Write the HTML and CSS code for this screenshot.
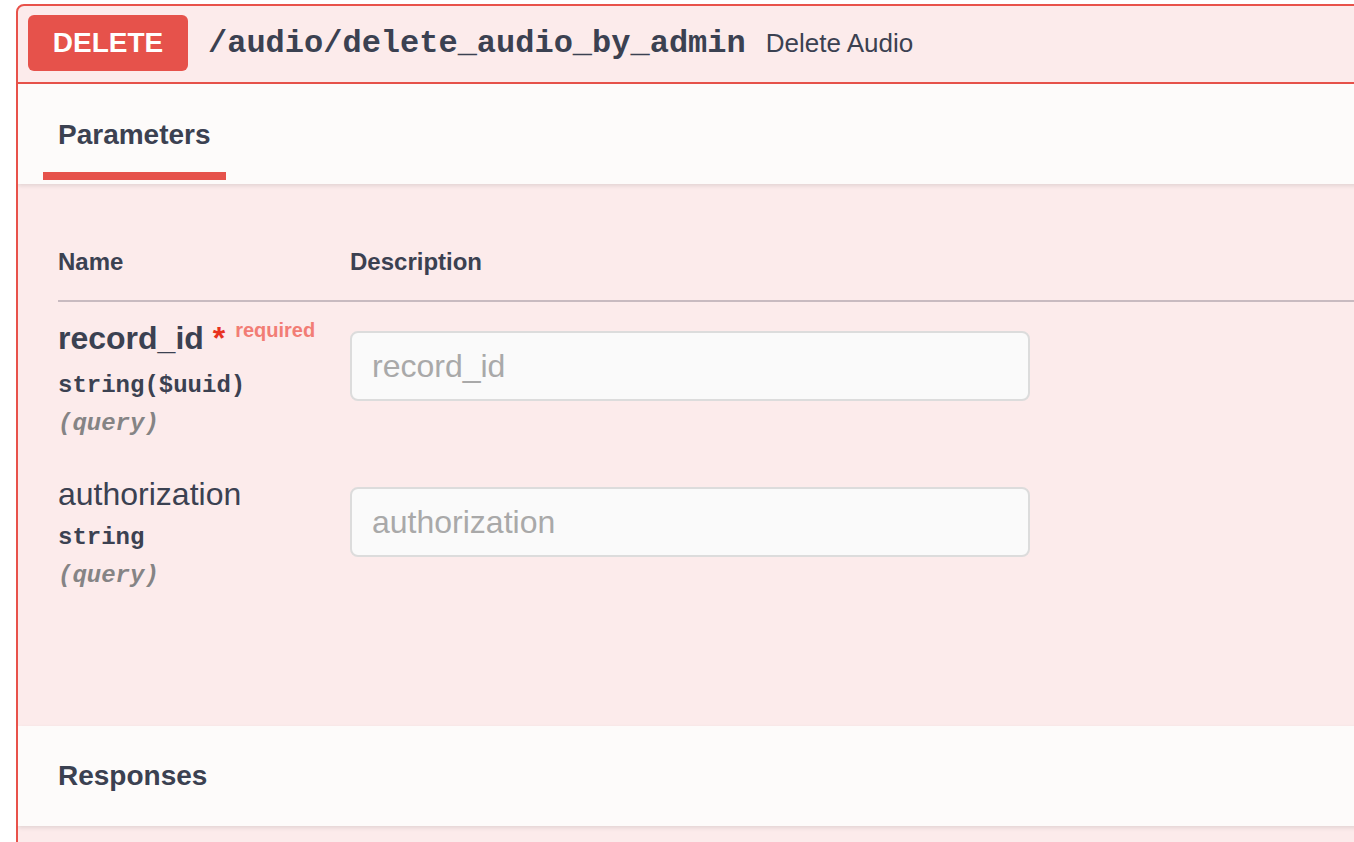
FILE: index.html
```html
<!DOCTYPE html>
<html lang="en">
<head>
<meta charset="utf-8">
<title>DELETE /audio/delete_audio_by_admin</title>
<link rel="stylesheet" href="styles.css">
</head>
<body>
<div class="opblock">
  <div class="summary">
    <span class="method">DELETE</span>
    <span class="path">/audio/delete_audio_by_admin</span>
    <span class="summary-desc">Delete Audio</span>
  </div>
  <div class="tab-header">
    <h4 class="tab-title"><span>Parameters</span></h4>
  </div>
  <div class="params">
    <table class="param-table">
      <thead>
        <tr>
          <th class="col-name">Name</th>
          <th class="col-desc">Description</th>
        </tr>
      </thead>
      <tbody>
        <tr>
          <td class="col-name">
            <div class="param-name required">record_id<span class="star">&nbsp;*</span><span class="req">required</span></div>
            <div class="param-type">string($uuid)</div>
            <div class="param-in">(query)</div>
          </td>
          <td class="col-desc">
            <input class="param-input" type="text" placeholder="record_id">
          </td>
        </tr>
        <tr>
          <td class="col-name">
            <div class="param-name">authorization</div>
            <div class="param-type">string</div>
            <div class="param-in">(query)</div>
          </td>
          <td class="col-desc">
            <input class="param-input" type="text" placeholder="authorization">
          </td>
        </tr>
      </tbody>
    </table>
  </div>
  <div class="section-header">
    <h4 class="section-title">Responses</h4>
  </div>
  <div class="after"></div>
</div>
</body>
</html>
```

FILE: styles.css
```css
html, body {
  margin: 0;
  padding: 0;
  background: #ffffff;
  overflow: hidden;
}

body {
  font-family: "Liberation Sans", Arial, sans-serif;
  color: #3b4151;
}

.opblock {
  margin: 4px 0 0 16px;
  width: 1520px;
  border: 2px solid #e8524a;
  border-radius: 8px;
  background: #fcebeb;
  overflow: hidden;
}

.summary {
  display: flex;
  align-items: center;
  padding: 9px 10px 11px;
  border-bottom: 2px solid #e8524a;
}

.method {
  min-width: 160px;
  padding: 12px 0;
  text-align: center;
  font-size: 28px;
  line-height: 32px;
  font-weight: 700;
  color: #ffffff;
  background: #e6524b;
  border-radius: 6px;
}

.path {
  padding: 0 20px;
  font-family: "Liberation Mono", "Courier New", monospace;
  font-size: 32px;
  font-weight: 700;
  color: #3b4151;
}

.summary-desc {
  font-size: 26px;
  color: #3b4151;
}

.tab-header {
  display: flex;
  align-items: center;
  box-sizing: border-box;
  height: 100px;
  padding: 2px 40px 0;
  background: #fdfbfa;
  box-shadow: 0 2px 4px rgba(0, 0, 0, 0.1);
  position: relative;
}

.tab-title {
  margin: 0;
  font-size: 28px;
  line-height: 32px;
  font-weight: 700;
}

.tab-title span {
  position: relative;
}

.tab-title span::after {
  content: "";
  position: absolute;
  left: -10%;
  bottom: -30px;
  width: 120%;
  height: 8px;
  background: #e6524b;
}

.params {
  padding: 40px 40px 116px;
}

.param-table {
  width: 100%;
  border-collapse: collapse;
}

.param-table th {
  padding: 24px 0;
  text-align: left;
  font-size: 24px;
  line-height: 28px;
  font-weight: 700;
  border-bottom: 2px solid #c8bac0;
}

.param-table td {
  padding: 18px 0 20px;
  vertical-align: top;
}

.col-name {
  width: 292px;
}

.param-name {
  font-size: 32px;
  line-height: 36px;
  white-space: nowrap;
}

.param-name.required {
  font-weight: 700;
}

.star {
  color: #e8321f;
}

.req {
  position: relative;
  top: -12px;
  padding: 0 10px;
  font-size: 20px;
  font-weight: 700;
  color: #f27d75;
}

.param-type {
  margin-top: 12px;
  font-family: "Liberation Mono", "Courier New", monospace;
  font-size: 24px;
  line-height: 28px;
  font-weight: 700;
  color: #3b4151;
}

.param-in {
  margin-top: 10px;
  font-family: "Liberation Mono", "Courier New", monospace;
  font-size: 24px;
  line-height: 28px;
  font-weight: 700;
  font-style: italic;
  color: #858485;
}

.param-input {
  display: block;
  box-sizing: border-box;
  width: 680px;
  height: 70px;
  margin-top: 11px;
  padding: 0 20px;
  border: 2px solid #dcdcdc;
  border-radius: 8px;
  background: #fafafa;
  font-family: "Liberation Sans", Arial, sans-serif;
  font-size: 32px;
  color: #3b4151;
  outline: none;
}

.param-input::placeholder {
  color: #a9a9a9;
}

.section-header {
  display: flex;
  align-items: center;
  box-sizing: border-box;
  height: 100px;
  padding: 0 40px;
  background: #fdfbfa;
  box-shadow: 0 2px 4px rgba(0, 0, 0, 0.1);
  position: relative;
}

.section-title {
  margin: 0;
  font-size: 28px;
  line-height: 32px;
  font-weight: 700;
}

.after {
  height: 60px;
}
```
